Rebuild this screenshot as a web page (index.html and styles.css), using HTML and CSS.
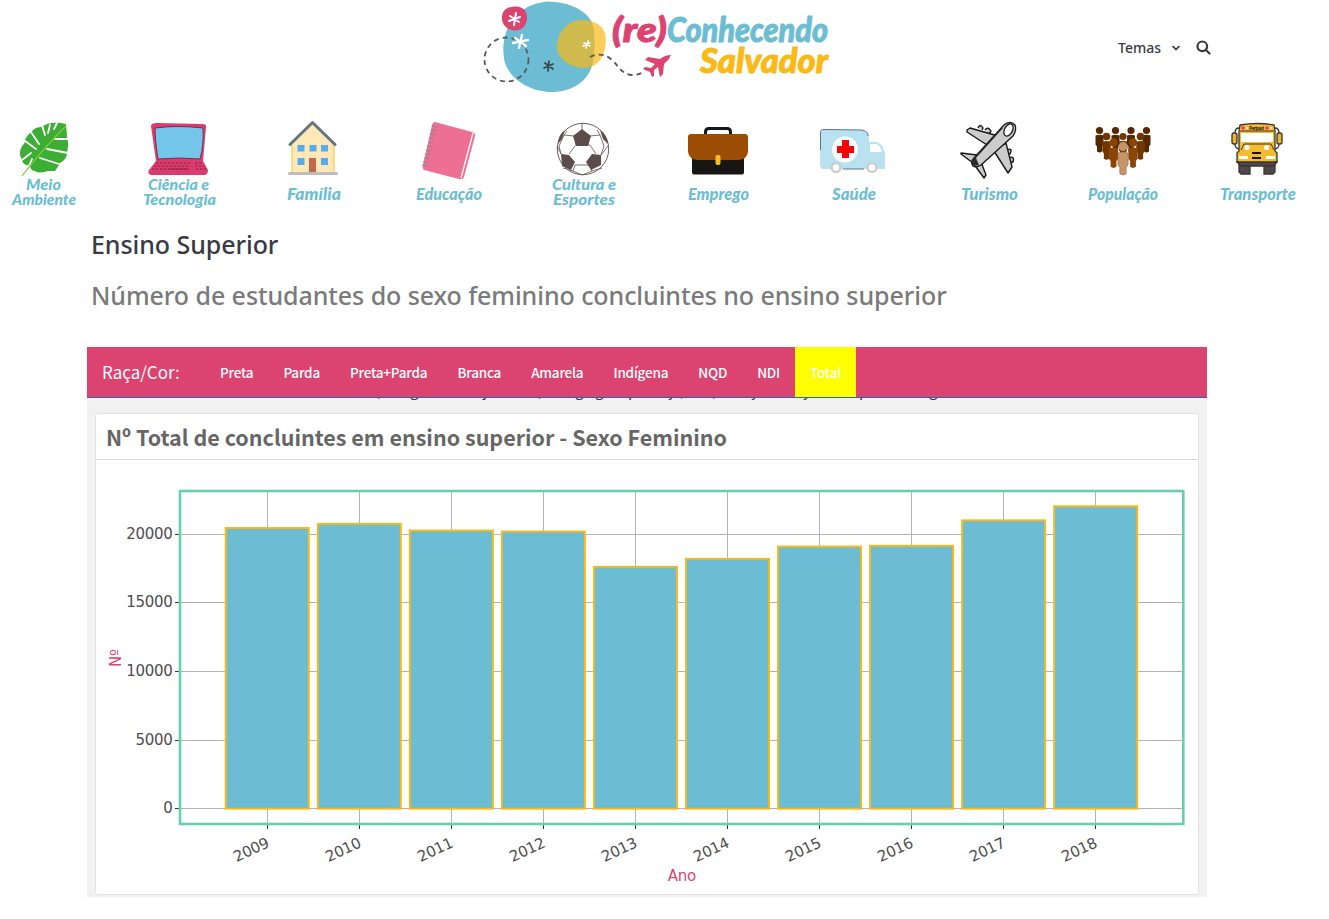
FILE: index.html
```html
<!DOCTYPE html>
<html lang="pt-BR">
<head>
<meta charset="utf-8">
<title>(re)Conhecendo Salvador</title>
<link rel="stylesheet" href="styles.css">
</head>
<body>
<header class="site-header">
  <svg class="logo" viewBox="475 0 360 100" width="360" height="100">
    <path fill="#6cbdd3" d="M548 1.500C565 2 581 7 590 19C596 28 595 48 593 62C589 82 571 93 548 92C525 90 504 75 503.500 54C502 32 512 5 548 1.500Z"/>
    <path fill="#fab915" fill-opacity=".7" d="M582 20C592 20 604 24 605.500 36C607 52 601 66 586 68C569 68 556 58 557 45C558 32 569 19 582 20Z"/>
    <path fill="#db4470" d="M512 7C521 5 528 10 527 19C526 28 519 32 512 30C505 29 501 22 502 16C503 10 507 7 512 7Z"/>
    <circle class="dash" cx="506.500" cy="59.500" r="22"/>
    <path class="dash" d="M590 57Q602 51 612 60C619 66 621 74 632 75Q639 75 645 71"/>
    <g fill="none" stroke-linecap="round">
      <path stroke="#fff" stroke-width="2" d="M516 13L514 25M510 16L519 22M509 21L520 17"/>
      <path stroke="#fff" stroke-width="2.300" d="M522 35L519 48M515 38L526 46M513 43L528 40"/>
      <path stroke="#34464d" stroke-width="1.700" d="M549 61L548 71M545 63L553 69M544 68L553 64"/>
      <path stroke="#fff" stroke-width="1.600" d="M588 41L586 48M584 43L590 46M583 46L590 43"/>
    </g>
    <path fill="#db4470" d="M671 55Q665 55 660 59L648 57L645 60L655 64L651 68L645 67L643 69L650 72L652 77L654 76L654 70L658 67L660 77L663 74L664 64Q669 60 671 55Z"/>
    <g class="script logo-text">
      <text x="612" y="41.500" textLength="55" lengthAdjust="spacingAndGlyphs" fill="#db4470" stroke="#db4470">(re)</text>
      <text x="667" y="41.500" textLength="161" lengthAdjust="spacingAndGlyphs" fill="#6cbdd3" stroke="#6cbdd3">Conhecendo</text>
      <text x="700" y="72.500" textLength="128" lengthAdjust="spacingAndGlyphs" fill="#fab915" stroke="#fab915">Salvador</text>
    </g>
  </svg>
  <nav class="site-menu">
    <span class="menu-label">Temas</span>
    <svg class="chevron" viewBox="0 0 10 8" width="10" height="8"><path d="M1.500 2L5 5.500L8.500 2"/></svg>
    <svg class="search" viewBox="0 0 15 15" width="15" height="15"><circle cx="6.300" cy="6.300" r="4.800"/><path d="M9.800 9.800L13.500 13.500"/></svg>
  </nav>
</header>

<nav class="themes">
  <svg class="theme" viewBox="0 112 88 100">
    <path fill="#3cae36" d="M66 124C54 121 46 124 43 126L41 127C36 127 33 130 31 132L29 134C26 137 25 139 25 141L24 144C20 147 19 154 21 158L22 161Q24 165 27 165L30 166Q31 171 35 171Q38 174 48 171L55 171L59 165L60 163Q66 160 67 154L68 146L68 142L67 136Z"/>
    <path fill="none" stroke="#fff" stroke-width="1.800" stroke-linecap="round" d="M42 125L45 135M31 132L39 144M25 141L36 149M22 160L31 153M50 125L48 133M57 123L54 129M67 139L55 139M68 153L47 149M59 164L40 158M29 166L32 159"/>
    <path d="M22 176Q41 151 66 126" fill="none" stroke="#83cb30" stroke-width="1.200"/>
    <g class="script stacked"><text x="26" y="190" textLength="35" lengthAdjust="spacingAndGlyphs">Meio</text><text x="12" y="204.500" textLength="64" lengthAdjust="spacingAndGlyphs">Ambiente</text></g>
  </svg>
  <svg class="theme" viewBox="135 112 88 100">
    <path fill="#db3b6d" d="M151 126Q151 123 157 123L202 124Q207 124 206 127L203 161L208 170Q208 175 204 175L151 175Q147 174 149 170L156 161Z"/>
    <path fill="#75c6eb" stroke="#743151" d="M155 128Q177 125 203 128Q204 145 200 159Q179 157 158 159Q155 140 155 128Z"/>
    <path fill="none" stroke="#b02d5e" stroke-width="2" stroke-dasharray="2.500 1.500" d="M156 163H190M154 166H190M152 169H189M195 163H202M195 166H204M196 169H206"/>
    <path stroke="#982754" d="M168 169H189"/>
    <g class="script stacked"><text x="148" y="190" textLength="61" lengthAdjust="spacingAndGlyphs">Ciência e</text><text x="143" y="204.500" textLength="73" lengthAdjust="spacingAndGlyphs">Tecnologia</text></g>
  </svg>
  <svg class="theme" viewBox="270 112 88 100">
    <path fill="#ffe8b7" d="M292 144L312.500 123L334 144V172H292Z"/><path stroke="#fcd04f" stroke-width="1.300" d="M292 145V172M334 145V172"/>
    <path fill="none" stroke="#637581" stroke-width="3" stroke-linecap="round" stroke-linejoin="round" d="M290 144.500L312.500 122.500L335 144.500"/>
    <path fill="#55acee" d="M297.500 145h7v6.500h-7zM309.500 145h7v6.500h-7zM321 145h7v6.500h-7zM297.500 158h7v7h-7zM321 158h7v7h-7z"/>
    <path fill="#c1694f" d="M309 158h7v14h-7z"/><path stroke="#bdbdbf" stroke-width="3" stroke-linecap="round" d="M289.500 173.500H336.500"/>
    <g class="script"><text x="287" y="200" textLength="54" lengthAdjust="spacingAndGlyphs">Família</text></g>
  </svg>
  <svg class="theme" viewBox="405 112 88 100">
    <path fill="#ed6f93" d="M435 122L472 132Q476 133 475 136L464 177Q463 180 459 179L424 170Q422 168 423 165L432 125Q433 122 435 122Z"/>
    <path fill="none" stroke="#fff" stroke-width="1.300" d="M473 133L461 178"/>
    <path stroke="#8b8990" stroke-width="1.200" d="M432 126L437 127M431 130L436 131M430 134L435 135M429 138L434 139M428 142L433 143M427 146L432 147M426 150L431 151M425 154L430 155M424 158L429 159M423 162L428 163M422 165L427 166"/>
    <g class="script"><text x="416" y="200" textLength="66" lengthAdjust="spacingAndGlyphs">Educação</text></g>
  </svg>
  <svg class="theme" viewBox="540 112 88 100">
    <circle cx="583" cy="149" r="25.700" fill="#fff" stroke="#5c4d4c" stroke-width=".9"/>
    <path fill="none" stroke="#5c4d4c" stroke-width=".8" d="M582 123V130M574 136L564 135L567 131M590 136L600 135L597 130M575 146L569 154M564 135L559 146L561 154M575 145L590 145L596 154M575 165H590M600 135L604 146L601 155M575 165L573 171L563 168M590 165L592 171L602 168M573 171L582 175L592 171M557 146L561 154M608 146L601 155"/>
    <path fill="#5c4d4c" d="M582 129L591 136L588 146L576 146L573 136ZM561 154L569 155L575 162L571 170L562 166ZM592 154L601 155L601 165L591 170L586 162ZM565 130L562 139L558 144Q558 135 565 130ZM600 130L603 139L608 144Q607 135 600 130Z"/>
    <g class="script stacked"><text x="552" y="190" textLength="64" lengthAdjust="spacingAndGlyphs">Cultura e</text><text x="553" y="204.500" textLength="62" lengthAdjust="spacingAndGlyphs">Esportes</text></g>
  </svg>
  <svg class="theme" viewBox="675 112 88 100">
    <path fill="none" stroke="#151719" stroke-width="3" d="M705.500 136V132Q705.500 128.500 709 128.500H727Q730.500 128.500 730.500 132V136"/>
    <rect x="692" y="148" width="52" height="26.500" rx="2" fill="#171615"/>
    <path fill="#9a4d03" d="M691 134H745Q748 134 748 137V152Q747 159 739 160H697Q689 159 688 152V137Q688 134 691 134Z"/>
    <rect x="715.500" y="155" width="5" height="10" rx="2" fill="#fbbd11"/>
    <g class="script"><text x="688" y="200" textLength="61" lengthAdjust="spacingAndGlyphs">Emprego</text></g>
  </svg>
  <svg class="theme" viewBox="810 112 88 100">
    <path fill="#b9e2f1" d="M823 129L862 130Q869 131 869 138V142H877Q883 144 885 153V169H822L820 166V132Z"/>
    <path fill="none" stroke="#51658d" stroke-width=".9" d="M820.500 150V133Q820 129.500 824 129.500L862 130Q868 131 868 136M843 169H864"/>
    <path fill="#fff" d="M870 144H876Q880 145 882 152H870Z"/><circle cx="845" cy="149.500" r="13" fill="#fff"/>
    <path fill="#f00" d="M842 140h7v6h5v7h-5v5h-7v-5h-5v-7h5z"/><g fill="#fff" stroke="#ccc" stroke-width="2.300"><circle cx="836" cy="167.500" r="4.400"/><circle cx="872" cy="167.500" r="4.400"/></g>
    <g class="script"><text x="832" y="200" textLength="44" lengthAdjust="spacingAndGlyphs">Saúde</text></g>
  </svg>
  <svg class="theme" viewBox="945 112 88 100">
    <g fill="#ccc" stroke="#19191a" stroke-width="1.400" stroke-linejoin="round"><path d="M978 128Q980 123 983 128L982 130M985 130Q988 126 991 131L989 134M1007 150Q1013 147 1010 154L1007 154M1008 158Q1015 155 1013 162L1010 163"/><path d="M967 130L970 128L998 136L987 145L967 132ZM1006 143L1012 167L1008 173L994 151ZM961 153L977 155L973 163L961 154ZM981 162L986 175L984 178L976 167Z"/>
    <path d="M1004 125Q1010 120 1015 125Q1017 130 1013 136L981 165Q976 168 973 166Q970 162 974 158Z"/></g><path fill="#2b292a" d="M1001 128L1003 128L976 158L979 165L974 166Q970 163 974 158Z"/><ellipse cx="1008.500" cy="130" rx="4" ry="6.500" transform="rotate(28 1008.500 130)" fill="#fff" stroke="#19191a" stroke-width="1.300"/>
    <g class="script"><text x="961" y="200" textLength="57" lengthAdjust="spacingAndGlyphs">Turismo</text></g>
  </svg>
  <svg class="theme" viewBox="1080 112 88 100">
    <defs><g id="person"><circle cx="0" cy="0" r="3.600"/><path d="M-4 5Q0 3.500 4 5V14L2.500 16V21Q0 23 -2.500 21V16L-4 14Z"/></g></defs>
    <g fill="#512800"><use href="#person" x="1099.500" y="130.500"/><use href="#person" x="1115.500" y="130.500"/><use href="#person" x="1131" y="130.500"/><use href="#person" x="1146.500" y="130.500"/></g>
    <g fill="#703703"><use href="#person" transform="translate(1106.500 136.500) scale(1.060)"/><use href="#person" transform="translate(1123 136.500)"/><use href="#person" transform="translate(1140.500 136.500) scale(1.060)"/></g>
    <g fill="#8a4507"><use href="#person" transform="translate(1113.500 142.500) scale(1.160)"/><use href="#person" transform="translate(1133 142.500) scale(1.160)"/></g>
    <g fill="#c69468" stroke="#704522" stroke-width=".3"><use href="#person" transform="translate(1123 146.500) scale(1.300)"/></g>
    <g class="script"><text x="1088" y="200" textLength="70" lengthAdjust="spacingAndGlyphs">População</text></g>
  </svg>
  <svg class="theme" viewBox="1215 112 88 100">
    <g stroke="#373536" stroke-width="1.300"><path fill="none" d="M1239 128Q1235 128 1235 133M1275 128Q1279 128 1279 133M1235 144Q1235 149 1240 149M1279 144Q1279 149 1274 149"/><rect x="1232" y="133" width="5" height="11" rx="2" fill="#f1b426"/><rect x="1277" y="133" width="5" height="11" rx="2" fill="#f1b426"/><path fill="#51474a" d="M1239 162h11v12h-9l-2-2zM1264 162h11v10l-2 2h-9z"/><path fill="#f6bc30" d="M1239 131L1240 125Q1257 122 1274 125L1275 131V151L1277 153V162Q1257 167 1237 162V153L1239 151Z"/><path fill="#514645" d="M1237 162H1277L1274 166H1241Z"/></g>
    <path fill="#fff" d="M1241 133h32v9h-32z"/><path fill="none" stroke="#373536" stroke-width="1" d="M1240 131H1274M1241 150L1244 144H1271L1274 150"/>
    <path fill="#fff" d="M1239 156h9v3h-9zM1266 156h9v3h-9z"/><circle cx="1247" cy="147.500" r="2.500" fill="#fff"/><circle cx="1266.500" cy="147.500" r="2.500" fill="#fff"/><path stroke="#171615" stroke-width="2" d="M1252 153H1261M1252 158H1261"/>
    <circle cx="1243" cy="128" r="1.700" fill="#ed3271"/><circle cx="1267" cy="128" r="1.700" fill="#ed3271"/><circle cx="1247" cy="128" r="1" fill="#fff"/><circle cx="1271" cy="128" r="1" fill="#fff"/><text class="bus-sign" x="1249" y="130" textLength="15">Peripari</text>
    <g class="script"><text x="1220" y="200" textLength="76" lengthAdjust="spacingAndGlyphs">Transporte</text></g>
  </svg>
</nav>

<main class="content">
  <h1 class="section-title">Ensino Superior</h1>
  <h2 class="section-subtitle">Número de estudantes do sexo feminino concluintes no ensino superior</h2>
  <section class="dashboard">
    <nav class="filter-bar">
      <span class="filter-title">Raça/Cor:</span>
      <a class="filter">Preta</a><a class="filter">Parda</a><a class="filter">Preta+Parda</a><a class="filter">Branca</a><a class="filter">Amarela</a><a class="filter">Indígena</a><a class="filter">NQD</a><a class="filter">NDI</a><a class="filter active">Total</a>
    </nav>
    <svg class="scrolled-note" viewBox="87 398 1120 3"><text y="396" x="375 410 483 538 575 595 628 668 680 710 751 803 859 929">(gj)ggpy,(yypg</text></svg>
    <article class="card">
      <h3 class="card-title">Nº Total de concluintes em ensino superior - Sexo Feminino</h3>
      <svg class="chart" viewBox="96 460 1102 433" id="chart"></svg>
    </article>
  </section>
</main>
<script src="chart.js"></script>
</body>
</html>
```
FILE: chart.js
```javascript
const chart = document.getElementById('chart');
const add = (tag, attrs, text) => {
  const el = document.createElementNS('http://www.w3.org/2000/svg', tag);
  for (const key in attrs) el.setAttribute(key, attrs[key]);
  if (text !== undefined) el.textContent = text;
  chart.appendChild(el);
};
const ticks = [[0, 808.5], [5000, 740.5], [10000, 671.5], [15000, 602.5], [20000, 534.5]];
const tops = [528, 523.8, 530.5, 531.5, 566.8, 558.8, 546.5, 545.8, 520.3, 506.2];
ticks.forEach(([value, y]) => {
  add('line', { class: 'grid', x1: 180, x2: 1183, y1: y, y2: y });
  add('line', { class: 'tick', x1: 175, x2: 179, y1: y, y2: y });
  add('text', { class: 'axis-label', x: 172.6, y: y + 4.5, 'text-anchor': 'end' }, value);
});
tops.forEach((top, i) => {
  const x = 267.5 + 92 * i;
  add('line', { class: 'grid', x1: x, x2: x, y1: 491, y2: 824 });
  add('line', { class: 'tick', x1: x, x2: x, y1: 825, y2: 829 });
  add('rect', { class: 'bar', x: x - 41.8 + i * 0.05, y: top, width: 83.1, height: 808.7 - top });
  add('text', { class: 'axis-label', 'text-anchor': 'end', transform: `translate(${x + 2.7} 846.5) rotate(-25)` }, 2009 + i);
});
add('rect', { class: 'frame', x: 180, y: 491, width: 1003.3, height: 333 });
add('text', { class: 'axis-title', x: 681.8, y: 881, 'text-anchor': 'middle' }, 'Ano');
add('text', { class: 'axis-title', 'text-anchor': 'middle', transform: 'translate(121 658) rotate(-90)' }, 'Nº');
```
FILE: styles.css
```css
* { box-sizing: border-box; }
body { margin: 0; background: #fff; overflow: hidden; font-family: "Noto Sans CJK SC", "Open Sans", sans-serif; color: #3a3a44; }
.site-header { display: flex; height: 111px; padding-left: 475px; border-bottom: 1px solid #fcfcfc; }
.logo { flex: none; }
.dash { fill: none; stroke: #555c60; stroke-width: 1.8; stroke-dasharray: 5 4; }
.script { font: italic 900 16px Lato, sans-serif; fill: #6cbdd3; }
.stacked { font-size: 15px; }
.logo-text { font-size: 35px; stroke-width: 1; stroke-linejoin: round; }
.site-menu { display: flex; align-items: center; height: 95px; margin-left: 283px; }
.menu-label { font: 500 14px/20px "Noto Sans", sans-serif; width: 44px; }
.chevron { margin-left: 9px; fill: none; stroke: #3a3a44; stroke-width: 1.7; }
.search { margin-left: 15px; fill: none; stroke: #3a3a44; stroke-width: 2.2; stroke-linecap: round; }
.themes { display: flex; gap: 47px; height: 101px; padding-top: 1px; }
.theme { flex: none; width: 88px; height: 100px; }
.bus-sign { font: 700 5px "Open Sans", sans-serif; fill: #33261b; }
.content { padding: 0 87px; }
.section-title, .section-subtitle { margin: 0 4px; font: 500 25px/36px "Noto Sans", sans-serif; letter-spacing: -.07px; white-space: nowrap; }
.section-title { padding-top: 14px; }
.section-subtitle { padding-top: 15px; color: #7a7a7a; }
.dashboard { width: 1120px; height: 550px; margin-top: 34px; background: #f1f1f1; }
.filter-bar { display: flex; align-items: center; height: 51px; padding-left: 15px; border-bottom: 1px solid #2766b7; background: #db4470; color: #fff; white-space: nowrap; }
.filter-title { width: 103px; font-size: 17px; line-height: 50px; }
.filter { padding: 0 15px; font-size: 13.5px; font-weight: 500; letter-spacing: -.2px; line-height: 50px; }
.active { background: #ff0; }
.scrolled-note { display: block; width: 1120px; height: 3px; font: 15px "Noto Sans CJK SC", sans-serif; fill: #333; }
.card { width: 1104px; height: 482px; margin: 12px 8px 0; border: 1px solid #e2e2e2; border-radius: 3px; background: #fff; }
.card-title { height: 46px; margin: 0; padding-left: 10px; border-bottom: 1px solid #d9d9d9; font-size: 21.5px; line-height: 46px; color: #666; white-space: nowrap; }
.chart { display: block; width: 1102px; height: 433px; font: 15px "DejaVu Sans", sans-serif; letter-spacing: -.25px; }
.grid { stroke: #b3b3b3; stroke-width: 1; }
.tick { stroke: #333; stroke-width: 1; }
.bar { fill: #6cbdd3; stroke: #fab915; stroke-width: 1.9; }
.frame { fill: none; stroke: #66cfab; stroke-width: 2.6; }
.axis-label { fill: #4d4d4d; }
.axis-title { fill: #db4470; }
```
